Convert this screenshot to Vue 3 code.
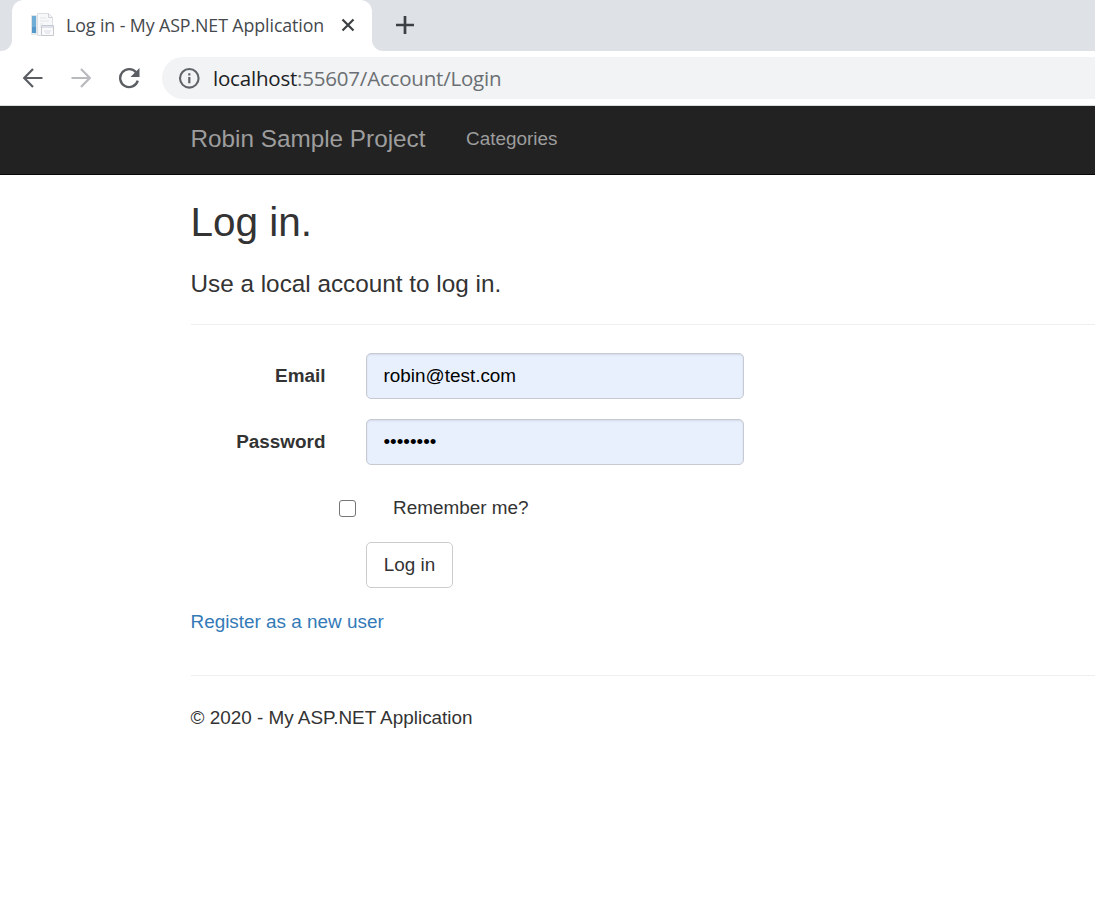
<script setup>
import { ref } from 'vue'

const email = ref('robin@test.com')
const password = ref('password')
const remember = ref(false)
</script>

<template>
  <div class="window">
    <div class="tabstrip">
      <div class="before-tab"></div>
      <div class="tab">
        <svg class="favicon" width="26" height="26" viewBox="0 0 26 26">
          <path d="M7.5 1.5h11l4 4v18h-15z" fill="#f7f8f9" stroke="#dcdee1" />
          <path d="M18.500 1.500v4h4" fill="none" stroke="#cfd2d6" />
          <path d="M10 6h6M10 9h9M10 12h3M10 15h2" stroke="#e3e6e8" />
          <path d="M1.500 3.500h5v19h-5z" fill="#e3eef5" stroke="#dfe6ea" />
          <path d="M2 4h4v17H2z" fill="#6fadd6" />
          <path d="M2 15h4v6H2z" fill="#5599ca" />
          <path d="M11.500 13.500h12v10h-12z" fill="#fafafb" stroke="#c6cad0" />
          <path d="M12 14h11v2H12z" fill="#dfe2eb" />
          <path d="M14 19h7M15 21h5" stroke="#dcdde8" />
        </svg>
        <span class="tab-title">Log in - My ASP.NET Application</span>
        <svg class="close" width="14" height="14" viewBox="0 0 14 14">
          <path d="M1.500 1.500l11 11M12.500 1.500l-11 11" stroke="#3c4043" stroke-width="2.200" />
        </svg>
      </div>
      <div class="after-tab">
        <svg width="18" height="18" viewBox="0 0 18 18">
          <path d="M9 0.500v17M0.500 9h17" stroke="#3c4043" stroke-width="2.700" stroke-linecap="round" />
        </svg>
      </div>
    </div>

    <div class="toolbar">
      <svg class="tool" width="22" height="22" viewBox="0 0 22 22" fill="none" stroke="#5b5f63" stroke-width="2.200">
        <path d="M20.500 11H2.500M11 2L2.200 11l8.800 9" />
      </svg>
      <svg class="tool" width="22" height="22" viewBox="0 0 22 22" fill="none" stroke="#b8babd" stroke-width="2.200">
        <path d="M1.500 11h18M11 2l8.800 9-8.800 9" />
      </svg>
      <svg class="tool" width="22" height="22" viewBox="0 0 22 22">
        <path d="M18.300 5.600A9 9 0 1 0 19.800 13.700" fill="none" stroke="#5b5f63" stroke-width="2.400" />
        <path d="M21.500 1v9h-9z" fill="#5b5f63" />
      </svg>
      <div class="omnibox">
        <svg width="22" height="22" viewBox="0 0 22 22">
          <circle cx="11.300" cy="11.300" r="9.300" fill="none" stroke="#5f6368" stroke-width="2.100" />
          <path d="M11.300 10v6.200M11.300 6.300v2.300" stroke="#5f6368" stroke-width="2.200" />
        </svg>
        <span class="url"><span class="host">localhost</span>:55607/Account/Login</span>
      </div>
    </div>

    <nav class="navbar">
      <a class="brand">Robin Sample Project</a>
      <a class="nav-link">Categories</a>
    </nav>

    <main class="content">
      <h2>Log in.</h2>
      <h4>Use a local account to log in.</h4>
      <hr />
      <form @submit.prevent>
        <div class="row">
          <label for="email">Email</label>
          <input id="email" v-model="email" class="control" type="text" />
        </div>
        <div class="row">
          <label for="password">Password</label>
          <input id="password" v-model="password" class="control" type="password" />
        </div>
        <div class="remember">
          <input id="remember" v-model="remember" type="checkbox" />
          <label for="remember">Remember me?</label>
        </div>
        <button class="submit" type="submit">Log in</button>
      </form>
      <a class="register">Register as a new user</a>
      <hr class="footer-rule" />
      <footer>© 2020 - My ASP.NET Application</footer>
    </main>
  </div>
</template>

<style>
body {
  background: #fff;
  overflow: hidden;
}
</style>

<style scoped>
* {
  box-sizing: border-box;
}
.window {
  height: 898px;
  overflow: hidden;
  background: #fff;
  color: #333;
  font: 18.9px/27px "Liberation Sans", Arial, sans-serif;
}
.tabstrip {
  display: flex;
  height: 51px;
  background: #fff;
}
.before-tab {
  width: 12px;
  background: #dee1e6;
  border-bottom-right-radius: 11px;
}
.tab {
  position: relative;
  display: flex;
  align-items: center;
  width: 360px;
  padding: 0 0 2px 18px;
  background: #fff;
}
.tab::before,
.tab::after {
  content: "";
  position: absolute;
  top: 0;
  width: 11px;
  height: 11px;
}
.tab::before {
  left: 0;
  background: radial-gradient(circle at 100% 100%, #fff 10.500px, #dee1e6 11px);
}
.tab::after {
  right: 0;
  background: radial-gradient(circle at 0 100%, #fff 10.500px, #dee1e6 11px);
}
.favicon {
  flex: none;
}
.tab-title {
  width: 258px;
  margin-left: 10px;
  font: 17.800px/26px "Open Sans", sans-serif;
  letter-spacing: -0.090px;
  white-space: nowrap;
  color: #45494d;
}
.close {
  flex: none;
  margin-left: 17px;
}
.after-tab {
  flex: 1;
  display: flex;
  align-items: center;
  padding: 0 0 1px 24px;
  background: #dee1e6;
  border-bottom-left-radius: 11px;
}
.toolbar {
  display: flex;
  align-items: center;
  height: 55px;
  padding: 0 0 1px 22px;
  border-bottom: 1px solid #d9dcdc;
}
.tool {
  flex: none;
  margin-right: 26px;
}
.omnibox {
  flex: 1;
  display: flex;
  align-items: center;
  height: 42px;
  margin: 1px 0 0 -4px;
  padding-left: 16px;
  background: #f1f3f4;
  border-radius: 21px 0 0 21px;
}
.url {
  margin-left: 13px;
  font: 20.500px/28px "Open Sans", sans-serif;
  letter-spacing: -0.200px;
  color: #6b6f73;
  white-space: nowrap;
}
.host {
  color: #202124;
}
.navbar {
  display: flex;
  align-items: center;
  height: 69px;
  padding: 0 0 3px 190.500px;
  background: #222;
  border-bottom: 1px solid #080808;
  color: #9d9d9d;
}
.brand {
  width: 275.500px;
  font-size: 24.300px;
}
.content {
  padding-left: 190.500px;
}
h2,
h4 {
  margin: 0;
  font-weight: 400;
}
h2 {
  padding-top: 25px;
  font-size: 40.500px;
  line-height: 45px;
}
h4 {
  margin-top: 25px;
  font-size: 24.300px;
  line-height: 27px;
}
hr {
  height: 1px;
  margin: 27px 0 28px;
  border: 0;
  background: #eee;
}
.row {
  display: grid;
  grid-template-columns: 135px 378px;
  column-gap: 40.500px;
  align-items: center;
  height: 46px;
  margin-bottom: 20px;
}
.row label {
  padding-bottom: 2px;
  font-weight: 700;
  text-align: right;
}
.control {
  width: 378px;
  height: 46px;
  padding: 0 16.500px;
  border: 1px solid #c8cad2;
  border-radius: 5px;
  background: #e8f0fe;
  box-shadow: inset 0 1px 2px rgba(0, 0, 0, 0.09);
  color: #000;
  font: inherit;
}
.remember {
  display: flex;
  align-items: center;
  height: 27px;
  margin: 29px 0 21px 148.500px;
}
.remember input {
  appearance: none;
  width: 17px;
  height: 17px;
  margin: 2px 37px 0 0;
  border: 1px solid #767676;
  border-radius: 3px;
  background: #fff;
}
.submit {
  display: block;
  width: 87px;
  height: 46px;
  margin-left: 175.500px;
  padding: 0 0 2px;
  border: 1px solid #ccc;
  border-radius: 5px;
  background: #fff;
  color: #333;
  font: inherit;
}
.register {
  display: block;
  margin-top: 20px;
  color: #337ab7;
}
.footer-rule {
  margin: 40px 0 28px;
}
</style>
